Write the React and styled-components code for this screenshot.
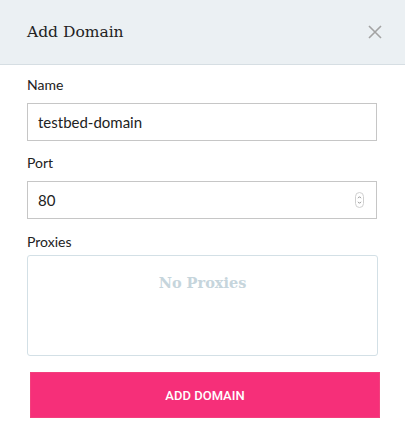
import React from 'react';
import styled, { createGlobalStyle } from 'styled-components';

const GlobalStyle = createGlobalStyle`
  html, body {
    margin: 0;
    padding: 0;
    background: #fff;
  }

  body {
    font-family: Lato, "Open Sans", sans-serif;
    color: #222;
  }
`;

const Modal = styled.div`
  width: 405px;
  height: 447px;
  background: #fff;
  display: flex;
  flex-direction: column;
`;

const Header = styled.div`
  height: 64px;
  background: #ebf0f3;
  border-bottom: 1px solid #d6dee3;
  display: flex;
  align-items: center;
  justify-content: space-between;
  padding: 0 23px 0 27px;
`;

const Title = styled.h2`
  margin: 0;
  font-family: "DejaVu Serif", serif;
  font-weight: normal;
  font-size: 15.5px;
  color: #222;
`;

const CloseButton = styled.button`
  border: 0;
  background: none;
  padding: 0;
  width: 14px;
  height: 14px;
  display: flex;
  cursor: pointer;
`;

const Form = styled.form`
  display: flex;
  flex-direction: column;
  padding: 11px 28px 0 27px;
`;

const Label = styled.label`
  display: block;
  font-size: 14px;
  line-height: 17px;
  color: #222;
  margin-top: ${p => p.gap || 0}px;
  margin-bottom: ${p => p.below || 10}px;
`;

const Field = styled.div`
  position: relative;
  height: 38px;
`;

const Input = styled.input`
  box-sizing: border-box;
  width: 100%;
  height: 38px;
  border: 1px solid #c6c6c6;
  border-radius: 0;
  padding: 0 10px;
  font-family: Lato, sans-serif;
  font-size: 15px;
  color: #222;
  outline: none;
`;

const Spinner = styled.svg`
  position: absolute;
  right: 13px;
  top: 11px;
`;

const ProxyBox = styled.div`
  box-sizing: border-box;
  height: 101px;
  margin-right: -1px;
  border: 1px solid #d3e0e6;
  border-radius: 3px;
  display: flex;
  justify-content: center;
  padding-top: 18px;
`;

const Empty = styled.span`
  font-family: "DejaVu Serif", serif;
  font-weight: bold;
  font-size: 14.5px;
  color: #c6d5dc;
`;

const Submit = styled.button`
  margin: 16px -3px 0 3px;
  height: 46px;
  background: #f62f79;
  border: 1px solid #f2407d;
  color: #fff;
  font-family: Roboto, sans-serif;
  font-weight: 500;
  font-size: 13px;
  text-transform: uppercase;
  cursor: pointer;
`;

const App = () => (
  <>
    <GlobalStyle />
    <Modal>
      <Header>
        <Title>Add Domain</Title>
        <CloseButton type="button" aria-label="Close">
          <svg width="14" height="14" viewBox="0 0 14 14">
            <path d="M1 1L13 13M13 1L1 13" stroke="#a3a3a3" strokeWidth="1.6" fill="none" />
          </svg>
        </CloseButton>
      </Header>
      <Form onSubmit={e => e.preventDefault()}>
        <Label>Name</Label>
        <Field>
          <Input defaultValue="testbed-domain" />
        </Field>
        <Label gap={13}>Port</Label>
        <Field>
          <Input defaultValue="80" />
          <Spinner width="9" height="16" viewBox="0 0 9 16">
            <rect x="0.5" y="0.5" width="8" height="15" rx="4" fill="#fff" stroke="#cfcfcf" />
            <path d="M3 6.2L4.5 4.7L6 6.2M3 9.8L4.5 11.3L6 9.8" stroke="#888" strokeWidth="0.9" fill="none" />
          </Spinner>
        </Field>
        <Label gap={14} below={5}>Proxies</Label>
        <ProxyBox>
          <Empty>No Proxies</Empty>
        </ProxyBox>
        <Submit type="submit">Add Domain</Submit>
      </Form>
    </Modal>
  </>
);

export default App;
